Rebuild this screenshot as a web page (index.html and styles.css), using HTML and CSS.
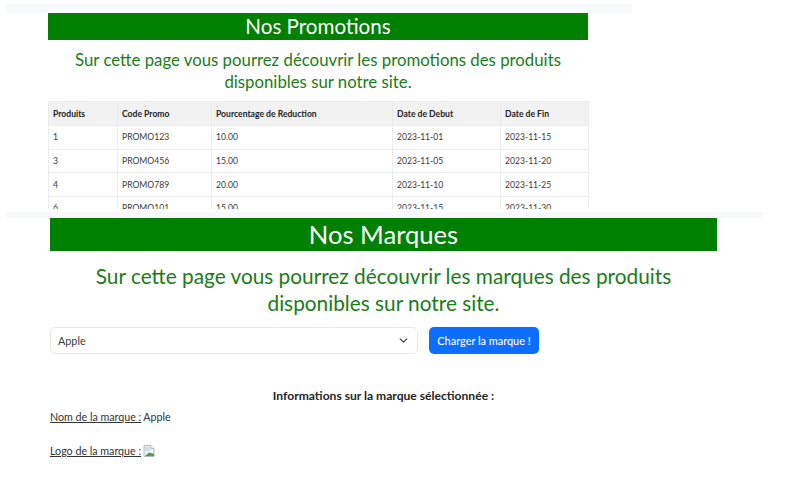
FILE: index.html
```html
<!DOCTYPE html>
<html lang="fr">
<head>
<meta charset="utf-8">
<title>Nos Promotions et Marques</title>
<link rel="stylesheet" href="styles.css">
</head>
<body>
<section class="promo">
  <div class="strip strip-promo"></div>
  <div class="promo-inner">
    <h1 class="title title-promo">Nos Promotions</h1>
    <p class="lead lead-promo">Sur cette page vous pourrez découvrir les promotions des produits disponibles sur notre site.</p>
    <table class="table">
      <colgroup><col class="c1"><col class="c2"><col class="c3"><col class="c4"><col class="c5"></colgroup>
      <thead>
        <tr><th>Produits</th><th>Code Promo</th><th>Pourcentage de Reduction</th><th>Date de Debut</th><th>Date de Fin</th></tr>
      </thead>
      <tbody>
        <tr><td>1</td><td>PROMO123</td><td>10.00</td><td>2023-11-01</td><td>2023-11-15</td></tr>
        <tr><td>3</td><td>PROMO456</td><td>15.00</td><td>2023-11-05</td><td>2023-11-20</td></tr>
        <tr><td>4</td><td>PROMO789</td><td>20.00</td><td>2023-11-10</td><td>2023-11-25</td></tr>
        <tr><td>6</td><td>PROMO101</td><td>15.00</td><td>2023-11-15</td><td>2023-11-30</td></tr>
      </tbody>
    </table>
  </div>
</section>
<section class="brand">
  <div class="strip strip-brand"></div>
  <div class="brand-inner">
    <h1 class="title title-brand">Nos Marques</h1>
    <p class="lead lead-brand">Sur cette page vous pourrez découvrir les marques des produits disponibles sur notre site.</p>
    <form class="brand-form">
      <div class="select">
        <span>Apple</span>
        <svg class="chevron" viewBox="0 0 16 16" width="12" height="12"><path d="M2 5l6 6 6-6" fill="none" stroke="#343a40" stroke-width="2" stroke-linecap="round" stroke-linejoin="round"/></svg>
      </div>
      <button class="btn" type="button">Charger la marque !</button>
    </form>
    <h2 class="info-title">Informations sur la marque sélectionnée :</h2>
    <p class="info info-name"><u>Nom de la marque :</u> Apple</p>
    <p class="info info-logo"><u>Logo de la marque :</u>
      <svg class="broken" viewBox="0 0 12 12" width="12" height="12">
        <path d="M1 .5h7l3 3v8H1z" fill="#eef1f6" stroke="#b4bdcb" stroke-width="1"/>
        <path d="M8 .5v3h3" fill="#fff" stroke="#b4bdcb" stroke-width="1"/>
        <path d="M2 11l4-3.5 2 .5 3 1v2z" fill="#4f9e3f"/>
        <path d="M2 2h5v4H2z" fill="#c6dcf4"/>
      </svg>
    </p>
  </div>
</section>
</body>
</html>
```

FILE: styles.css
```css
* { box-sizing: border-box; }
html, body { margin: 0; padding: 0; background: #fff; }
body {
  font-family: "Lato", "Open Sans", sans-serif;
  color: #212529;
  padding-top: 4px;
  overflow: hidden;
  height: 477px;
}
.strip { background: #f8f9fa; }
.promo { height: 205px; width: 626px; margin-left: 6px; overflow: hidden; }
.strip-promo { height: 9px; }
.promo-inner { margin-left: 42px; width: 540px; }
.title {
  margin: 0;
  background: #008000;
  color: #fff;
  font-weight: 400;
  text-align: center;
}
.title-promo { height: 27px; font-size: 20.6px; line-height: 27px; }
.lead { margin: 0; color: #197d19; text-align: center; }
.lead-promo { font-size: 16.8px; line-height: 22px; padding: 9px 0 8px; }
.table { border-collapse: collapse; table-layout: fixed; width: 540px; font-size: 8.6px; color: #3a3a3a; }
.c1 { width: 69px; } .c2 { width: 94px; } .c3 { width: 181px; } .c4 { width: 108px; } .c5 { width: 88px; }
.table th, .table td {
  border: 1px solid #ececee;
  padding: 0 4px;
  height: 23.7px;
  text-align: left;
  white-space: nowrap;
}
.table th { background: #f2f2f2; font-weight: 700; color: #222; height: 24px; border-color: #ececec; }
.brand { width: 757px; margin: 3px 0 0 6px; }
.strip-brand { height: 6px; }
.brand-inner { margin-left: 44px; width: 667px; }
.title-brand { height: 33px; font-size: 25.6px; line-height: 33px; }
.lead-brand { font-size: 20.8px; line-height: 27px; padding: 11px 0 11px; }
.brand-form { display: flex; gap: 11px; }
.select {
  width: 368px;
  height: 27px;
  padding: 0 7px;
  border: 1px solid #e6e9ec;
  border-radius: 5px;
  font-size: 10.8px;
  color: #3a3f44;
  display: flex;
  align-items: center;
  justify-content: space-between;
}
.chevron { width: 9px; height: 9px; margin-right: 2px; }
.btn {
  width: 110px;
  height: 27px;
  border: 0;
  border-radius: 5px;
  background: #0d6efd;
  color: #fff;
  font: 500 10.9px "Lato", "Open Sans", sans-serif;
  padding: 0;
}
.info-title { margin: 33px 0 0; font-size: 12.1px; line-height: 17px; font-weight: 700; text-align: center; color: #212529; }
.info { margin: 0; font-size: 10.7px; line-height: 16px; color: #333; display: flex; align-items: center; gap: 2px; }
.info-name { margin-top: 5px; }
.info-logo { margin-top: 18px; }
.broken { flex: none; }
```
